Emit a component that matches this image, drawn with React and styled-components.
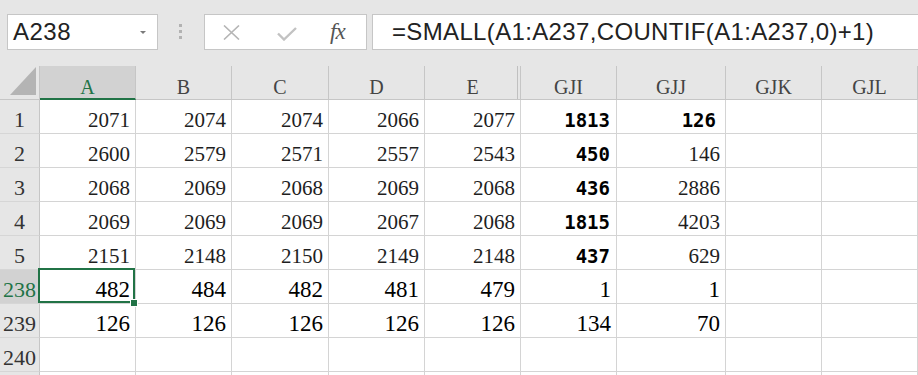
import React from 'react';
import styled, { createGlobalStyle } from 'styled-components';

const GlobalStyle = createGlobalStyle`
  html, body { margin: 0; padding: 0; background: #ffffff; overflow: hidden; }
  body { width: 918px; height: 375px; }
`;

const Page = styled.div`
  width: 918px;
  height: 375px;
  overflow: hidden;
  background: #ffffff;
  display: flex;
  flex-direction: column;
`;

const TopBar = styled.div`
  flex: none;
  height: 66px;
  box-sizing: border-box;
  background: #e6e6e6;
  display: flex;
  align-items: flex-start;
  padding: 14px 0 0 7px;
`;

const Box = styled.div`
  height: 36px;
  box-sizing: border-box;
  background: #ffffff;
  border: 1px solid #c6c6c6;
  display: flex;
  align-items: center;
`;

const NameBox = styled(Box)`
  width: 151px;
  padding: 0 11px 0 5px;
  justify-content: space-between;
  font-family: "Liberation Sans", Arial, sans-serif;
  font-size: 24px;
  letter-spacing: 0.5px;
  color: #222;
`;

const DropArrow = styled.span`
  width: 0;
  height: 0;
  border-left: 3.5px solid transparent;
  border-right: 3.5px solid transparent;
  border-top: 3px solid #7a7a7a;
`;

const Grip = styled.div`
  margin: 10px 0 0 21px;
  display: flex;
  flex-direction: column;
  gap: 3px;
`;

const GripDot = styled.span`
  width: 3px;
  height: 3px;
  background: #b2b2b2;
`;

const FxBox = styled(Box)`
  margin-left: 22px;
  width: 163px;
  padding-left: 18px;
`;

const IconSlot = styled.span`
  display: flex;
  align-items: center;
  margin-left: ${p => p.$ml || 0}px;
  margin-top: ${p => p.$mt || 0}px;
`;

const FxLabel = styled.span`
  font-family: "Liberation Serif", "Times New Roman", serif;
  font-style: italic;
  font-size: 23px;
  color: #555;
  margin-left: 33px;
  letter-spacing: -1px;
`;

const FormulaBox = styled(Box)`
  margin-left: 5px;
  flex: 1;
  border-right: none;
  padding-left: 19px;
  font-family: "Liberation Sans", Arial, sans-serif;
  font-size: 24px;
  letter-spacing: 0.35px;
  color: #222;
  white-space: nowrap;
`;

const Grid = styled.div`
  display: grid;
  grid-template-columns: 40px 96px 96px 97px 96px 96px 96px 109px 96px 96px;
  grid-auto-rows: 34px;
`;

const BaseCell = styled.div`
  box-sizing: border-box;
  position: relative;
  display: flex;
  line-height: 1;
  white-space: nowrap;
`;

const Corner = styled(BaseCell)`
  background: #e6e6e6;
  border-right: 1px solid #c6c6c6;
  border-bottom: 1px solid #c6c6c6;
  align-items: flex-end;
  justify-content: flex-end;
  padding: 0 3px 4px 0;
`;

const CornerTriangle = styled.span`
  width: 26px;
  height: 28px;
  background: #b4b4b4;
  clip-path: polygon(100% 0, 100% 100%, 0 100%);
`;

const ColHead = styled(BaseCell)`
  background: ${p => (p.$selected ? '#d2d2d2' : '#e6e6e6')};
  color: ${p => (p.$selected ? '#217346' : '#444')};
  border-right: 1px solid #c6c6c6;
  border-bottom: ${p => (p.$selected ? '2px solid #217346' : '1px solid #c6c6c6')};
  box-shadow: ${p => (p.$gapAfter ? 'inset -2px 0 0 #e6e6e6, inset -3px 0 0 #c0c0c0' : 'none')};
  align-items: flex-end;
  justify-content: center;
  padding-bottom: ${p => (p.$selected ? 1.5 : 2.5)}px;
  font-family: "Liberation Serif", "Times New Roman", serif;
  font-size: 20px;
`;

const RowHead = styled(BaseCell)`
  background: ${p => (p.$selected ? '#d2d2d2' : '#e6e6e6')};
  color: ${p => (p.$selected ? '#217346' : '#333')};
  border-right: 1px solid #c6c6c6;
  border-bottom: 1px solid #d6d6d6;
  align-items: flex-end;
  justify-content: center;
  padding-bottom: 2.5px;
  font-family: "Liberation Serif", "Times New Roman", serif;
  font-size: 22px;
`;

const Cell = styled(BaseCell)`
  border-right: 1px solid #d4d4d4;
  border-bottom: 1px solid #d4d4d4;
  align-items: flex-end;
  justify-content: flex-end;
  padding: 0 ${p => p.$pr ?? 5}px ${p => (p.$mono ? 3 : 2.5)}px 0;
  font-family: ${p => (p.$mono ? '"DejaVu Sans Mono", "Liberation Mono", monospace' : '"Liberation Serif", "Times New Roman", serif')};
  font-weight: ${p => (p.$mono ? 700 : 400)};
  font-size: ${p => (p.$mono ? 19 : p.$large ? 23 : 21)}px;
  color: ${p => (p.$large || p.$mono ? '#000' : '#1e1e1e')};

  ${p =>
    p.$active &&
    `
    &::after {
      content: '';
      position: absolute;
      top: -2px;
      left: -2px;
      right: 0;
      bottom: 0;
      border: 2px solid #217346;
      z-index: 2;
      pointer-events: none;
    }
  `}
`;

const FillHandle = styled.span`
  position: absolute;
  right: -2px;
  bottom: -3px;
  width: 6px;
  height: 6px;
  background: #217346;
  box-shadow: 0 0 0 1px #ffffff;
  z-index: 3;
`;

const columns = ['A', 'B', 'C', 'D', 'E', 'GJI', 'GJJ', 'GJK', 'GJL'];

const rows = [
  { n: '1', v: ['2071', '2074', '2074', '2066', '2077', '1813', '126'], mono: [5, 6] },
  { n: '2', v: ['2600', '2579', '2571', '2557', '2543', '450', '146'], mono: [5] },
  { n: '3', v: ['2068', '2069', '2068', '2069', '2068', '436', '2886'], mono: [5] },
  { n: '4', v: ['2069', '2069', '2069', '2067', '2068', '1815', '4203'], mono: [5] },
  { n: '5', v: ['2151', '2148', '2150', '2149', '2148', '437', '629'], mono: [5] },
  { n: '238', v: ['482', '484', '482', '481', '479', '1', '1'], large: true, selected: true },
  { n: '239', v: ['126', '126', '126', '126', '126', '134', '70'], large: true },
  { n: '240', v: [] },
  { n: '', v: [] },
];

function XIcon() {
  return (
    <svg width="17" height="15" viewBox="0 0 17 15">
      <path d="M1 0.5 L16 14.5 M16 0.5 L1 14.5" stroke="#b5b5b5" strokeWidth="1.6" fill="none" />
    </svg>
  );
}

function CheckIcon() {
  return (
    <svg width="20" height="14" viewBox="0 0 20 14">
      <path d="M1 6.5 L7 12.5 L19 1" stroke="#c2c2c2" strokeWidth="2.4" fill="none" strokeLinejoin="miter" />
    </svg>
  );
}

export default function App() {
  return (
    <Page>
      <GlobalStyle />
      <TopBar>
        <NameBox>
          <span>A238</span>
          <DropArrow />
        </NameBox>
        <Grip>
          <GripDot />
          <GripDot />
          <GripDot />
        </Grip>
        <FxBox>
          <IconSlot $mt={1}><XIcon /></IconSlot>
          <IconSlot $ml={37} $mt={3}><CheckIcon /></IconSlot>
          <FxLabel>fx</FxLabel>
        </FxBox>
        <FormulaBox>=SMALL(A1:A237,COUNTIF(A1:A237,0)+1)</FormulaBox>
      </TopBar>
      <Grid>
        <Corner>
          <CornerTriangle />
        </Corner>
        {columns.map((c, i) => (
          <ColHead key={c} $selected={i === 0} $gapAfter={c === 'E'}>
            {c}
          </ColHead>
        ))}
        {rows.map((r, ri) => (
          <React.Fragment key={ri}>
            <RowHead $selected={r.selected}>{r.n}</RowHead>
            {columns.map((c, i) => {
              const mono = r.mono && r.mono.includes(i);
              const active = r.selected && i === 0;
              let pr = 5;
              if (mono) pr = i === 5 ? 6 : 9;
              return (
                <Cell key={c} $mono={mono} $large={r.large} $active={active} $pr={pr}>
                  {r.v[i] || ''}
                  {active && <FillHandle />}
                </Cell>
              );
            })}
          </React.Fragment>
        ))}
      </Grid>
    </Page>
  );
}
